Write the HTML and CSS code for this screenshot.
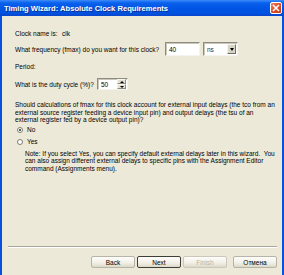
FILE: index.html
```html
<!DOCTYPE html>
<html lang="en">
<head>
  <meta charset="UTF-8">
  <title>Timing Wizard: Absolute Clock Requirements</title>
  <link rel="stylesheet" href="styles.css">
</head>
<body>
  <div class="window">
    <div class="titlebar">
      <span class="title">Timing Wizard: Absolute Clock Requirements</span>
      <span class="close">
        <svg width="8" height="8" viewBox="0 0 8 8"><path d="M1 1L7 7M7 1L1 7" stroke="#fff" stroke-width="1.6"/></svg>
      </span>
    </div>
    <div class="frame">
      <div class="content">
        <div class="row row-name">
          <span class="label-name">Clock name is:</span>
          <span>clk</span>
        </div>
        <div class="row row-freq">
          <span class="label-freq">What frequency (fmax) do you want for this clock?</span>
          <span class="field field-freq">40</span>
          <span class="field select">ns<span class="drop"></span></span>
        </div>
        <div class="row row-period">Period:</div>
        <div class="row row-duty">
          <span class="label-duty">What is the duty cycle (%)?</span>
          <span class="field spin">50
            <span class="spin-btns">
              <span class="spin-btn"><span class="tri-up"></span></span>
              <span class="spin-btn"><span class="tri-down"></span></span>
            </span>
          </span>
        </div>
        <p class="para">Should calculations of fmax for this clock account for external input delays (the tco from an<br>external source register feeding a device input pin) and output delays (the tsu of an<br>external register fed by a device output pin)?</p>
        <div class="row radio-row row-no"><span class="radio checked"></span>No</div>
        <div class="row radio-row row-yes"><span class="radio"></span>Yes</div>
        <p class="note">Note: If you select Yes, you can specify default external delays later in this wizard.&nbsp; You<br>can also assign different external delays to specific pins with the Assignment Editor<br>command (Assignments menu).</p>
      </div>
      <div class="footer">
        <div class="separator"></div>
        <div class="buttons">
          <span class="btn">Back</span>
          <span class="btn btn-default">Next</span>
          <span class="btn btn-disabled">Finish</span>
          <span class="btn btn-cancel">Отмена</span>
        </div>
      </div>
    </div>
  </div>
</body>
</html>
```

FILE: styles.css
```css
*{
  margin: 0;
  padding: 0;
  box-sizing: border-box;
}
body{
  width: 284px;
  height: 275px;
  overflow: hidden;
  font-family: "Liberation Sans", Arial, sans-serif;
  font-size: 6.5px;
  color: #000;
  background-color: #ECE9D8;
}
.window{
  display: flex;
  flex-direction: column;
  height: 275px;
}
.titlebar{
  height: 16px;
  display: flex;
  align-items: center;
  justify-content: space-between;
  padding: 0 2px 0 4px;
  background: linear-gradient(#3D8CFB 0, #0A62EC 18%, #0055E5 50%, #0053E1 80%, #0846CC 100%);
}
.title{
  color: #fff;
  font-weight: bold;
  font-size: 7.6px;
  text-shadow: 1px 1px 0 #0A2F8C;
}
.close{
  width: 12px;
  height: 12px;
  border: 1px solid #fff;
  border-radius: 2px;
  background: linear-gradient(135deg, #F08A6C 0, #E0502C 45%, #C83A18 100%);
  display: flex;
  align-items: center;
  justify-content: center;
}
.frame{
  flex: 1;
  display: flex;
  flex-direction: column;
  border-left: 2px solid #0A50DE;
  border-right: 2px solid #0A50DE;
  background-color: #ECE9D8;
}
.content{
  padding: 10px 0 0 13px;
}
.row{
  display: flex;
  align-items: center;
}
.row-name{
  height: 14px;
}
.label-name{
  width: 47px;
}
.row-freq{
  height: 14px;
  margin-top: 2px;
}
.label-freq{
  width: 150px;
}
.field{
  height: 14px;
  background: #fff;
  border-top: 1px solid #8E8B7F;
  border-left: 1px solid #8E8B7F;
  border-bottom: 1px solid #F4F3EE;
  border-right: 1px solid #F4F3EE;
  box-shadow: inset 1px 1px 0 #C9C6BA;
  display: flex;
  align-items: center;
  padding-left: 3px;
  position: relative;
}
.field-freq{
  width: 35px;
}
.select{
  width: 35px;
  margin-left: 3px;
  color: #333;
}
.drop{
  position: absolute;
  right: 1px;
  top: 1px;
  width: 9px;
  height: 10px;
  background: #D8D4C6;
  border: 1px solid #F6F5F0;
  border-right-color: #716F64;
  border-bottom-color: #716F64;
}
.drop::after{
  content: "";
  position: absolute;
  left: 1.5px;
  top: 3px;
  border-left: 2.5px solid transparent;
  border-right: 2.5px solid transparent;
  border-top: 3px solid #000;
}
.row-period{
  height: 8px;
  margin-top: 6px;
}
.row-duty{
  height: 12px;
  margin-top: 8px;
}
.label-duty{
  width: 82px;
}
.spin{
  width: 31px;
  height: 12px;
}
.spin-btns{
  position: absolute;
  right: 1px;
  top: 0;
  bottom: 0;
  display: flex;
  flex-direction: column;
}
.spin-btn{
  flex: 1;
  width: 9px;
  background: #E4E1D4;
  border: 1px solid #F6F5F0;
  border-right-color: #8E8B7F;
  border-bottom-color: #8E8B7F;
  position: relative;
}
.tri-up, .tri-down{
  position: absolute;
  left: 2px;
  top: 1px;
  border-left: 2px solid transparent;
  border-right: 2px solid transparent;
}
.tri-up{
  border-bottom: 2px solid #000;
}
.tri-down{
  border-top: 2px solid #000;
}
.para{
  line-height: 7.5px;
  margin-top: 11px;
}
.radio-row{
  height: 8px;
}
.row-no{
  margin-top: 2px;
}
.row-yes{
  margin-top: 4px;
}
.radio{
  width: 6px;
  height: 6px;
  border-radius: 50%;
  border: 1px solid #7E7C72;
  background: #fff;
  margin: 0 4px 0 2px;
  position: relative;
}
.radio.checked::after{
  content: "";
  position: absolute;
  left: 1px;
  top: 1px;
  width: 2px;
  height: 2px;
  border-radius: 50%;
  background: #222;
}
.note{
  line-height: 7.5px;
  margin-top: 4px;
  padding-left: 10px;
}
.footer{
  margin-top: auto;
  padding: 0 5px 7px 6px;
}
.separator{
  height: 2px;
  border-top: 1px solid #ACA899;
  border-bottom: 1px solid #fff;
}
.buttons{
  display: flex;
  justify-content: flex-end;
  gap: 2px;
  margin-top: 8px;
}
.btn{
  width: 44px;
  height: 12px;
  display: flex;
  align-items: center;
  justify-content: center;
  border: 1px solid #B7B4A8;
  border-radius: 2px;
  background: linear-gradient(#FDFDFB 0, #F1EFE6 60%, #DCD8C8 100%);
  color: #000;
}
.btn-default{
  border-color: #3F3E38;
}
.btn-disabled{
  color: #B5B2A5;
  border-color: #CBC8BB;
}
.btn-cancel{
  margin-left: 4px;
}
```
